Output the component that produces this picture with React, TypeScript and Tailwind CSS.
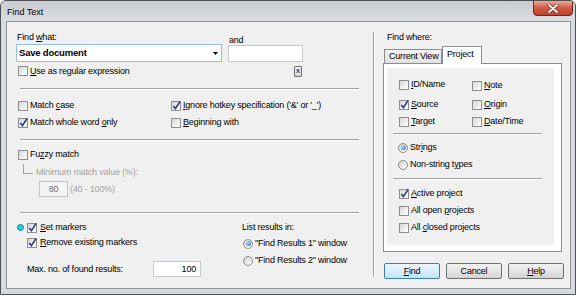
import React from "react";

type KidProps = { children?: React.ReactNode };

const U = ({ children }: KidProps) => (
  <span className="underline decoration-[1px] underline-offset-[1px]">{children}</span>
);

function Box({ checked }: { checked?: boolean }) {
  return (
    <span className="relative flex h-[10px] w-[10px] shrink-0 border border-[#8f8f8f] bg-gradient-to-br from-[#d6d6d6] via-[#ececec] to-[#ffffff]">
      {checked && (
        <svg width="11" height="11" viewBox="0 0 11 11" className="absolute -left-[1px] -top-[2px]">
          <path d="M2.3 6 L4.4 8.6 L9 1.5" fill="none" stroke="#2b3f8a" strokeWidth="1.6" />
        </svg>
      )}
    </span>
  );
}

function Radio({ on }: { on?: boolean }) {
  return (
    <span className="flex h-[10px] w-[10px] shrink-0 items-center justify-center rounded-full border border-[#8f8f8f] bg-gradient-to-br from-[#d2d2d2] to-[#fdfdfd]">
      {on && (
        <span className="h-[5px] w-[5px] rounded-full bg-[radial-gradient(circle_at_35%_35%,#b6e0ff,#1f63c4)]" />
      )}
    </span>
  );
}

function Check({ checked, children }: { checked?: boolean; children?: React.ReactNode }) {
  return (
    <div className="flex h-[17px] items-center">
      <Box checked={checked} />
      <span className="ml-[2px] whitespace-nowrap">{children}</span>
    </div>
  );
}

function RadioRow({ on, children }: { on?: boolean; children?: React.ReactNode }) {
  return (
    <div className="flex h-[17px] items-center">
      <Radio on={on} />
      <span className="ml-[2px] whitespace-nowrap">{children}</span>
    </div>
  );
}

function Sep({ w }: { w: string }) {
  return <div className={"h-[2px] border-t border-b border-t-[#a0a0a0] border-b-white " + w} />;
}

function Btn({ children, def }: { children?: React.ReactNode; def?: boolean }) {
  return (
    <div
      className={
        def
          ? "flex h-[16px] w-[56px] items-center justify-center rounded-[2px] border border-[#3c7fb1] bg-gradient-to-b from-[#eaf6fd] via-[#d9f0fc] to-[#bee6fd]"
          : "flex h-[16px] w-[56px] items-center justify-center rounded-[2px] border border-[#707070] bg-gradient-to-b from-[#f2f2f2] via-[#e6e6e6] to-[#d3d3d3]"
      }
    >
      <span>{children}</span>
    </div>
  );
}

export default function App() {
  return (
    <div
      className="flex h-[295px] w-[576px] flex-col overflow-hidden rounded-t-[6px] border border-[#4d4f52] bg-[#d6d9dd] text-[9px] leading-none tracking-[-0.2px] text-black"
      style={{ fontFamily: '"Liberation Sans", Arial, sans-serif' }}
    >
      {/* title bar */}
      <div className="flex h-[20px] shrink-0 items-start justify-between bg-gradient-to-b from-[#c9ccd1] to-[#dadde1]">
        <span className="ml-[6px] mt-[7px] text-[9px] tracking-normal">Find Text</span>
        <div className="-mt-[1px] mr-[2px] flex h-[16px] w-[40px] items-center justify-center rounded-b-[4px] border border-[#6b2a20] bg-gradient-to-b from-[#e9a999] via-[#cf5a44] to-[#c2412a]">
          <svg width="12" height="9" viewBox="0 0 12 9">
            <path d="M2 1 L10 8 M10 1 L2 8" stroke="#5a2a22" strokeWidth="3.2" strokeLinecap="round" />
            <path d="M2 1 L10 8 M10 1 L2 8" stroke="#ffffff" strokeWidth="1.8" strokeLinecap="round" />
          </svg>
        </div>
      </div>

      {/* body with frame */}
      <div className="flex h-[268px] shrink-0 pl-[5px] pr-[4px]">
        <div className="flex h-[268px] w-[565px] border border-[#8d949c] bg-[#f0f0f0]">
          {/* left section */}
          <div className="flex w-[366px] shrink-0 flex-col pl-[10px] pt-[9px]">
            {/* find what */}
            <div className="flex">
              <div className="flex w-[205px] flex-col">
                <div className="flex h-[12px] items-center">
                  <span>
                    Find <U>w</U>hat:
                  </span>
                </div>
                <div className="-ml-[1px] mt-[1px] flex h-[18px] w-[206px] items-center justify-between border border-[#97bde6] bg-white pl-[2px] pr-[3px]">
                  <span className="text-[9.5px] font-bold">Save document</span>
                  <svg width="5" height="3" viewBox="0 0 5 3">
                    <path d="M0 0 H5 L2.5 3 Z" fill="#000" />
                  </svg>
                </div>
              </div>
              <div className="ml-[6px] flex flex-col pt-[3px]">
                <div className="flex h-[12px] items-center pl-[1px]">and</div>
                <div className="-mt-[1px] h-[17px] w-[75px] border border-[#c5cad1] bg-white" />
              </div>
            </div>
            {/* regex row */}
            <div className="flex h-[18px] w-[285px] items-center justify-between">
              <div className="ml-[1px]">
                <Check>
                  <U>U</U>se as regular expression
                </Check>
              </div>
              <div className="flex h-[11px] w-[8px] items-center justify-center rounded-[1px] border border-[#6f6f6f] bg-gradient-to-b from-[#f4f4f4] to-[#d8d8d8] pb-[1px] text-[8px]">
                x
              </div>
            </div>
            <div className="ml-[3px] mt-[8px]">
              <Sep w="w-[339px]" />
            </div>
            {/* options */}
            <div className="mt-[7px] flex">
              <div className="ml-[1px] flex w-[152px] flex-col">
                <Check>
                  Match <U>c</U>ase
                </Check>
                <Check checked>
                  Match whole word <U>o</U>nly
                </Check>
              </div>
              <div className="ml-[1px] flex flex-col">
                <Check checked>
                  <U>I</U>gnore hotkey specification ('&amp;' or '_')
                </Check>
                <Check>
                  <U>B</U>eginning with
                </Check>
              </div>
            </div>
            <div className="ml-[3px] mt-[8px]">
              <Sep w="w-[339px]" />
            </div>
            {/* fuzzy */}
            <div className="ml-[1px] mt-[5px]">
              <Check>
                Fu<U>z</U>zy match
              </Check>
            </div>
            <div className="mt-[1px] flex h-[17px] items-center">
              <span className="ml-[6px] h-[10px] w-[10px] self-start border-b border-l border-[#a0a0a0]" />
              <span className="ml-[3px] text-[#a3a3a3]">Minimum match value (%):</span>
            </div>
            <div className="flex h-[16px] items-center">
              <div className="ml-[22px] flex h-[16px] w-[29px] items-center justify-center border border-[#c2c6cc] bg-[#f4f4f4] text-[#6d6d6d]">
                80
              </div>
              <span className="ml-[2px] text-[#a3a3a3]">(40 - 100%)</span>
            </div>
            <div className="ml-[3px] mt-[15px]">
              <Sep w="w-[339px]" />
            </div>
            {/* markers */}
            <div className="mt-[6px] flex">
              <div className="flex w-[225px] flex-col">
                <div className="flex h-[15px] items-center">
                  <span className="h-[7px] w-[7px] rounded-full border border-[#1e7c86] bg-[#12d4e6]" />
                  <span className="ml-[3px] flex items-center">
                    <Box checked />
                    <span className="ml-[3px]">
                      <U>S</U>et markers
                    </span>
                  </span>
                </div>
                <div className="flex h-[15px] items-center pl-[10px]">
                  <Box checked />
                  <span className="ml-[3px]">
                    <U>R</U>emove existing markers
                  </span>
                </div>
                <div className="mt-[11px] flex h-[16px] items-center">
                  <span className="w-[136px] pl-[10px]">Max. no. of found results:</span>
                  <div className="flex h-[16px] w-[48px] items-center justify-end border border-[#c5cad1] bg-white pr-[4px]">
                    100
                  </div>
                </div>
              </div>
              <div className="flex flex-col">
                <div className="flex h-[15px] items-center">List results in:</div>
                <div className="ml-[1px]">
                  <RadioRow on>"Find Results 1" window</RadioRow>
                  <RadioRow>"Find Results 2" window</RadioRow>
                </div>
              </div>
            </div>
          </div>

          {/* divider */}
          <div className="mb-[11px] mt-[10px] flex w-[2px] shrink-0">
            <div className="w-[1px] bg-[#a0a0a0]" />
            <div className="w-[1px] bg-white" />
          </div>

          {/* right section */}
          <div className="flex w-[195px] shrink-0 flex-col pl-[8px] pt-[9px]">
            <div className="ml-[4px] flex h-[12px] items-center">Find where:</div>
            <div className="relative z-10 mt-[3px] flex h-[17px] items-end pl-[1px]">
              <div className="flex h-[14px] w-[58px] items-center border border-b-0 border-[#898c95] bg-gradient-to-b from-[#f3f3f3] to-[#e1e1e1] pl-[4px]">
                Current View
              </div>
              <div className="-mb-[1px] flex h-[18px] w-[40px] items-center border border-b-0 border-[#898c95] bg-white pb-[2px] pl-[4px]">
                Project
              </div>
            </div>
            <div className="h-[189px] w-[179px] border border-[#898c95] bg-white pb-[6px] pl-[3px] pr-[7px] pt-[4px]">
              <div className="flex h-[177px] flex-col bg-[#f0f0f0] pt-[8px]">
                <div className="flex pl-[12px]">
                  <div className="flex w-[73px] flex-col">
                    <Check>
                      <U>I</U>D/Name
                    </Check>
                    <div className="mt-[3px]">
                      <Check checked>
                        <U>S</U>ource
                      </Check>
                    </div>
                    <Check>
                      <U>T</U>arget
                    </Check>
                  </div>
                  <div className="flex flex-col">
                    <div className="mt-[1px]">
                      <Check>
                        <U>N</U>ote
                      </Check>
                    </div>
                    <div className="mt-[2px]">
                      <Check>
                        <U>O</U>rigin
                      </Check>
                    </div>
                    <Check>
                      <U>D</U>ate/Time
                    </Check>
                  </div>
                </div>
                <div className="ml-[6px] mt-[3px]">
                  <Sep w="w-[149px]" />
                </div>
                <div className="ml-[11px] mt-[4px]">
                  <RadioRow on>
                    Str<U>i</U>ngs
                  </RadioRow>
                  <RadioRow>
                    Non-string t<U>y</U>pes
                  </RadioRow>
                </div>
                <div className="ml-[6px] mt-[5px]">
                  <Sep w="w-[149px]" />
                </div>
                <div className="ml-[12px] mt-[5px]">
                  <Check checked>
                    <U>A</U>ctive project
                  </Check>
                  <Check>
                    All open <U>p</U>rojects
                  </Check>
                  <Check>
                    All <U>c</U>losed projects
                  </Check>
                </div>
              </div>
            </div>
            <div className="mt-[11px] flex gap-[6px] pl-[1px]">
              <Btn def>
                <U>F</U>ind
              </Btn>
              <Btn>Cancel</Btn>
              <Btn>
                <U>H</U>elp
              </Btn>
            </div>
          </div>
        </div>
      </div>
    </div>
  );
}
